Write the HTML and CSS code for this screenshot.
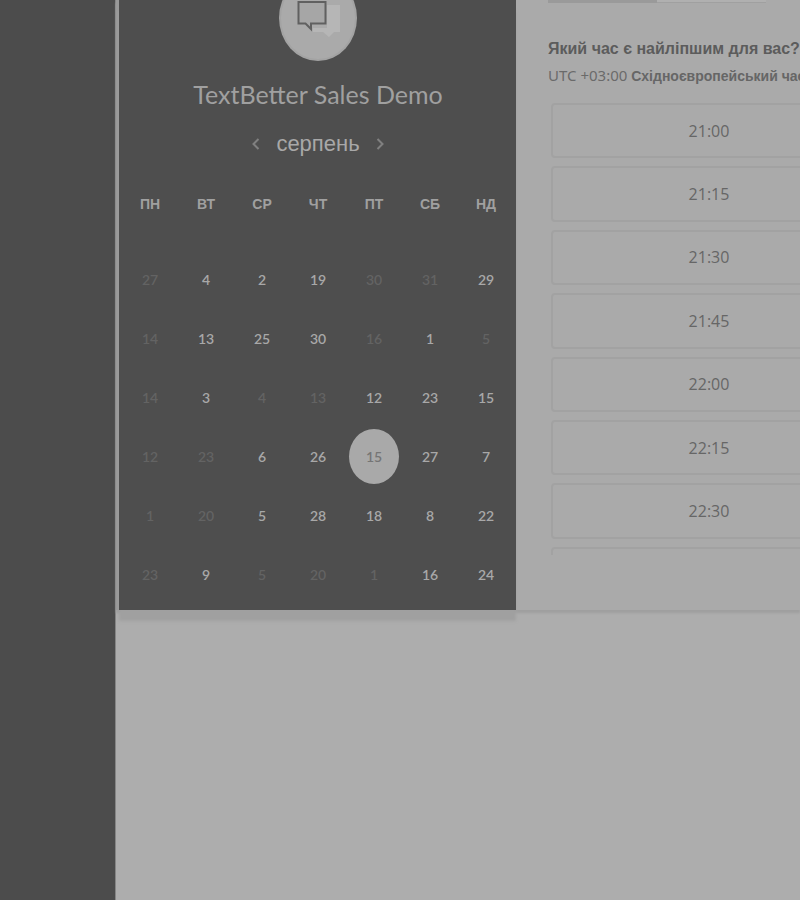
FILE: index.html
```html
<!DOCTYPE html>
<html lang="uk">
<head>
<meta charset="utf-8">
<meta name="viewport" content="width=device-width, initial-scale=1">
<title>TextBetter Sales Demo</title>
<link rel="stylesheet" href="styles.css">
</head>
<body>
<div class="page">
  <aside class="rail"></aside>
  <main class="content">
    <div class="card">
      <section class="calendar">
        <svg class="logo" viewBox="0 0 78 86" aria-hidden="true">
          <ellipse cx="39" cy="43" rx="39" ry="43" fill="#a3a3a3"/>
          <ellipse cx="39" cy="43" rx="37" ry="41" fill="#aaaaaa"/>
          <path d="M48 30h13v27h-6l-5 5-6-5H34v-4h14z" fill="#b6b6b6"/>
          <path d="M19.500 27H46.500V48.500H32V54L26.500 48.500H19.500Z" fill="#a6a6a6" stroke="#606060" stroke-width="2"/>
        </svg>
        <h1 class="name">TextBetter Sales Demo</h1>
        <div class="month">
          <button class="arrow" type="button" aria-label="Попередній місяць"><svg viewBox="0 0 8 12"><path d="M6.500 1L1.500 6l5 5"/></svg></button>
          <h2 class="month-name">серпень</h2>
          <button class="arrow" type="button" aria-label="Наступний місяць"><svg viewBox="0 0 8 12"><path d="M1.500 1l5 5-5 5"/></svg></button>
        </div>
        <table class="days">
          <thead>
            <tr><th>ПН</th><th>ВТ</th><th>СР</th><th>ЧТ</th><th>ПТ</th><th>СБ</th><th>НД</th></tr>
          </thead>
          <tbody>
            <tr><td class="off">27</td><td>4</td><td>2</td><td>19</td><td class="off">30</td><td class="off">31</td><td>29</td></tr>
            <tr><td class="off">14</td><td>13</td><td>25</td><td>30</td><td class="off">16</td><td>1</td><td class="off">5</td></tr>
            <tr><td class="off">14</td><td>3</td><td class="off">4</td><td class="off">13</td><td>12</td><td>23</td><td>15</td></tr>
            <tr><td class="off">12</td><td class="off">23</td><td>6</td><td>26</td><td><button class="selected" type="button">15</button></td><td>27</td><td>7</td></tr>
            <tr><td class="off">1</td><td class="off">20</td><td>5</td><td>28</td><td>18</td><td>8</td><td>22</td></tr>
            <tr><td class="off">23</td><td>9</td><td class="off">5</td><td class="off">20</td><td class="off">1</td><td>16</td><td>24</td></tr>
          </tbody>
        </table>
      </section>
      <section class="times">
        <div class="duration"><span class="duration-on"></span><span class="duration-off"></span></div>
        <h2 class="question">Який час є найліпшим для вас?</h2>
        <p class="zone"><span class="utc">UTC +03:00</span> <b>Східноєвропейський час</b></p>
        <div class="scroller">
          <div class="slots">
            <button class="slot" type="button">21:00</button>
            <button class="slot" type="button">21:15</button>
            <button class="slot" type="button">21:30</button>
            <button class="slot" type="button">21:45</button>
            <button class="slot" type="button">22:00</button>
            <button class="slot" type="button">22:15</button>
            <button class="slot" type="button">22:30</button>
            <button class="slot" type="button" aria-label="Пізніше"></button>
          </div>
        </div>
      </section>
    </div>
  </main>
</div>
</body>
</html>
```
FILE: styles.css
```css
* { box-sizing: border-box; }
body {
  margin: 0;
  overflow: hidden;
  background: #adadad;
  font-family: "Liberation Sans", sans-serif;
}
h1, h2, p { margin: 0; font-weight: 400; }
button { padding: 0; border: 0; background: none; font: inherit; color: inherit; }

.page { display: flex; min-height: 100vh; }
.rail { flex: none; width: 115px; background: #4c4c4c; }
.content { flex: 1; min-width: 0; border-left: 1px solid #858585; }

.card {
  display: flex;
  padding-left: 3px;
  background: linear-gradient(90deg, #999 3px, #aaa 3px);
  box-shadow: 0 3px 2px #9f9f9f;
}

.calendar {
  flex: none;
  display: flex;
  flex-direction: column;
  align-items: center;
  padding: 0 2px 6px 3px;
  background: #4e4e4e;
  color: #a8a8a8;
  box-shadow: 0 11px 3px #a0a0a0;
}
.logo { display: block; width: 78px; height: 86px; margin-top: -25px; }
.name {
  margin-top: 17px;
  font-family: Lato, sans-serif;
  font-size: 25px;
  line-height: 32px;
  color: #a0a0a0;
}
.month { display: flex; align-items: center; gap: 16px; margin-top: 17px; height: 34px; }
.month-name { font-size: 22px; line-height: 34px; }
.arrow { display: flex; color: #808080; }
.arrow svg { width: 8px; height: 12px; fill: none; stroke: currentColor; stroke-width: 2; }

.days {
  margin-top: 28px;
  border-collapse: collapse;
  table-layout: fixed;
  width: 392px;
  font-family: Lato, sans-serif;
  font-size: 14px;
  font-weight: 600;
}
.days th {
  height: 61px;
  padding: 6px 0 0;
  vertical-align: top;
  font: bold 14px/18px "Liberation Sans", sans-serif;
  color: #a0a0a0;
}
.days td { height: 59px; padding: 0; text-align: center; vertical-align: middle; }
.days .off { color: #636363; }
.selected {
  display: block;
  width: 50px;
  height: 55px;
  margin: 0 auto;
  border-radius: 50%;
  background: #a9a9a9;
  color: #757575;
}

.times { flex: 1; min-width: 0; padding: 0 0 0 32px; overflow: hidden; }
.duration { display: flex; width: 218px; height: 3px; }
.duration-on { flex: 1; background: #9a9a9a; }
.duration-off { flex: 1; background: #b0b0b0; border-bottom: 1px solid #a0a0a0; }
.question { margin-top: 34px; font-size: 16px; font-weight: 700; line-height: 24px; color: #5c5c5c; white-space: nowrap; }
.zone { margin-top: 4px; font-size: 14px; line-height: 20px; color: #666; white-space: nowrap; }
.utc { font-family: "Noto Sans", sans-serif; font-size: 15px; color: #6a6a6a; }
.scroller { width: 316px; height: 452px; margin: 17px 0 0 3px; overflow: hidden; }
.slots { display: grid; grid-template-rows: repeat(8, 1fr); gap: 8px; height: 499px; }
.slot {
  border: 2px solid #a2a2a2;
  border-radius: 4px;
  font: 16px/24px "Open Sans", sans-serif;
  color: #666;
}
```
